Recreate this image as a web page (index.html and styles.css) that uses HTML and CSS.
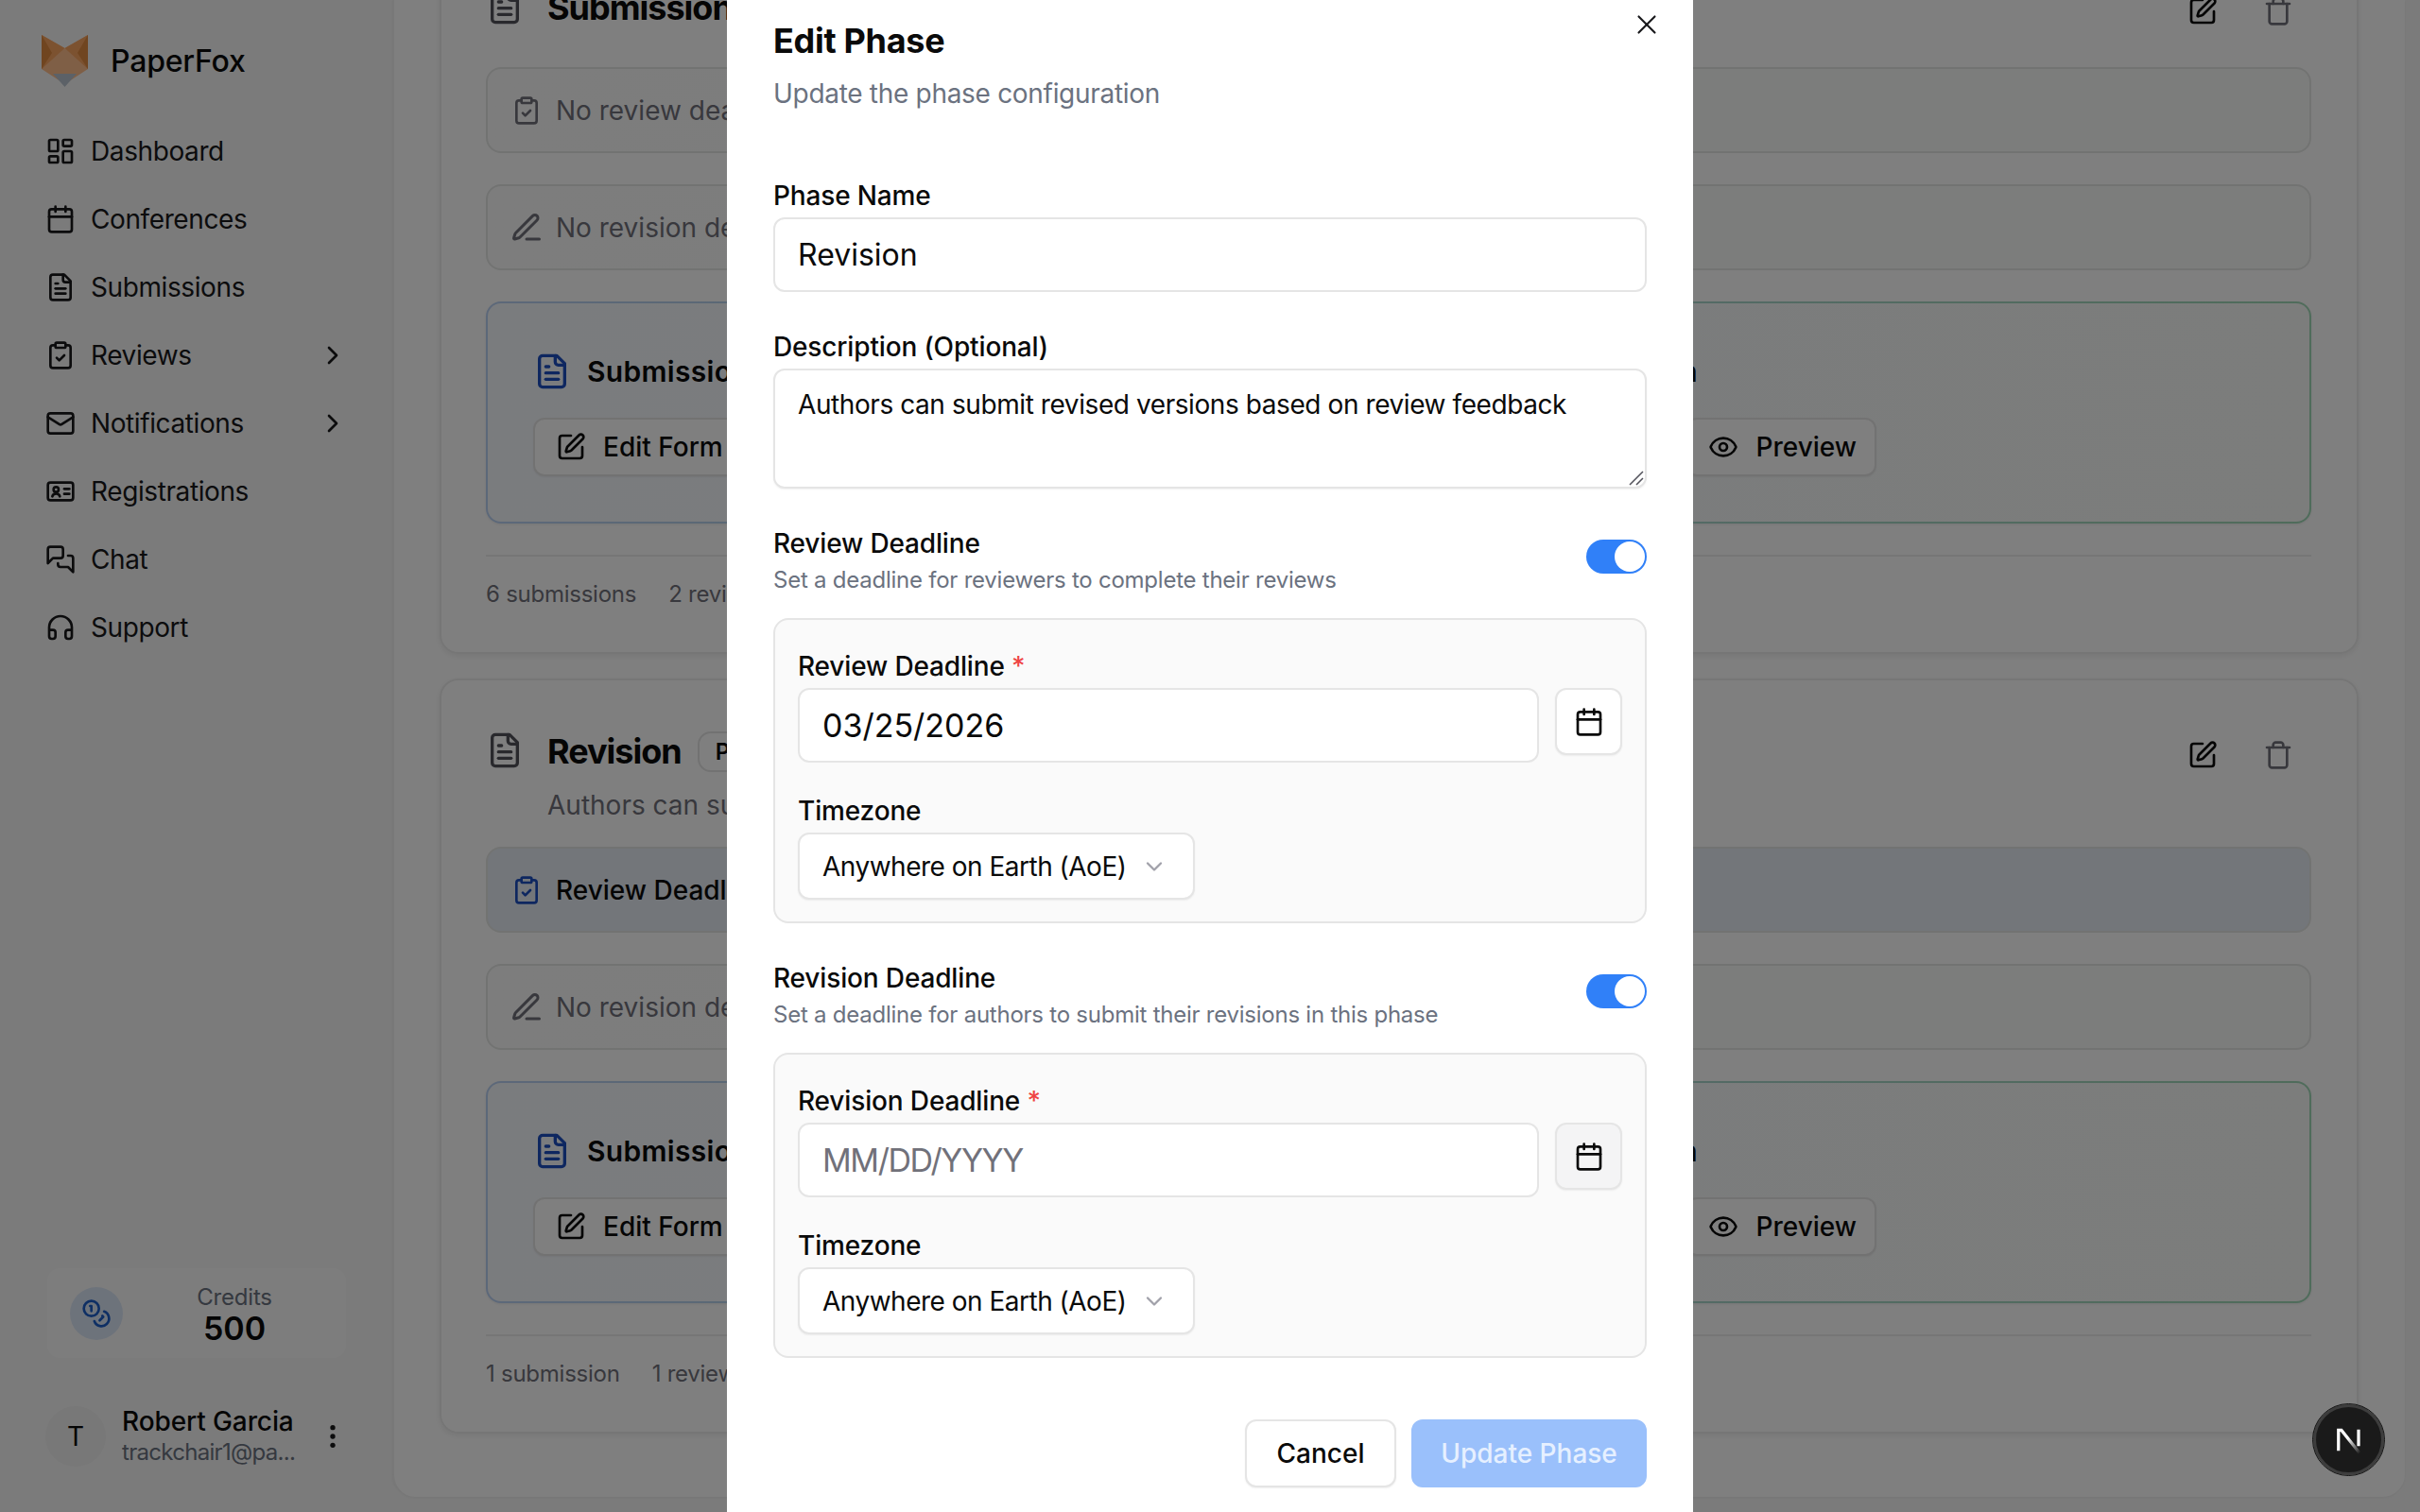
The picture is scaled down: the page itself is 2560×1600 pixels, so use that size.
FILE: index.html
```html
<!DOCTYPE html>
<html>
<head>
  <title>PaperFox - Edit Phase</title>
  <link rel="stylesheet" href="styles.css">
</head>
<body>
  <!-- icon sprite -->
  <svg class="sprite" xmlns="http://www.w3.org/2000/svg">
    <symbol id="i-dashboard" viewBox="0 0 24 24"><rect x="3" y="3" width="7" height="9" rx="1"/><rect x="14" y="3" width="7" height="5" rx="1"/><rect x="14" y="12" width="7" height="9" rx="1"/><rect x="3" y="16" width="7" height="5" rx="1"/></symbol>
    <symbol id="i-calendar" viewBox="0 0 24 24"><path d="M8 2v4"/><path d="M16 2v4"/><rect x="3" y="4" width="18" height="18" rx="2"/><path d="M3 10h18"/></symbol>
    <symbol id="i-file" viewBox="0 0 24 24"><path d="M15 2H6a2 2 0 0 0-2 2v16a2 2 0 0 0 2 2h12a2 2 0 0 0 2-2V7Z"/><path d="M14 2v4a2 2 0 0 0 2 2h4"/><path d="M10 9H8"/><path d="M16 13H8"/><path d="M16 17H8"/></symbol>
    <symbol id="i-clipboard" viewBox="0 0 24 24"><rect x="8" y="2" width="8" height="4" rx="1"/><path d="M16 4h2a2 2 0 0 1 2 2v14a2 2 0 0 1-2 2H6a2 2 0 0 1-2-2V6a2 2 0 0 1 2-2h2"/><path d="m9 14 2 2 4-4"/></symbol>
    <symbol id="i-mail" viewBox="0 0 24 24"><rect x="2" y="4" width="20" height="16" rx="2"/><path d="m22 7-8.97 5.7a1.94 1.94 0 0 1-2.06 0L2 7"/></symbol>
    <symbol id="i-chevron-right" viewBox="0 0 24 24"><path d="m9 18 6-6-6-6"/></symbol>
    <symbol id="i-chevron-down" viewBox="0 0 24 24"><path d="m6 9 6 6 6-6"/></symbol>
    <symbol id="i-contact" viewBox="0 0 24 24"><rect x="2" y="5" width="20" height="14" rx="2"/><circle cx="8.5" cy="10.500" r="2"/><path d="M5.500 16c.4-1.500 1.600-2.200 3-2.200s2.600.7 3 2.200"/><path d="M15 10h4"/><path d="M15 14h4"/></symbol>
    <symbol id="i-chat" viewBox="0 0 24 24"><path d="M14 9a2 2 0 0 1-2 2H6l-4 4V4a2 2 0 0 1 2-2h8a2 2 0 0 1 2 2z"/><path d="M18 9h2a2 2 0 0 1 2 2v11l-4-4h-6a2 2 0 0 1-2-2v-1"/></symbol>
    <symbol id="i-headphones" viewBox="0 0 24 24"><path d="M3 14h3a2 2 0 0 1 2 2v3a2 2 0 0 1-2 2H5a2 2 0 0 1-2-2v-7a9 9 0 0 1 18 0v7a2 2 0 0 1-2 2h-1a2 2 0 0 1-2-2v-3a2 2 0 0 1 2-2h3"/></symbol>
    <symbol id="i-edit" viewBox="0 0 24 24"><path d="M12 3H5a2 2 0 0 0-2 2v14a2 2 0 0 0 2 2h14a2 2 0 0 0 2-2v-7"/><path d="M18.375 2.625a1 1 0 0 1 3 3l-9.013 9.014a2 2 0 0 1-.853.505l-2.873.84a.5.5 0 0 1-.62-.62l.84-2.873a2 2 0 0 1 .506-.852z"/></symbol>
    <symbol id="i-trash" viewBox="0 0 24 24"><path d="M3 6h18"/><path d="M19 6v14c0 1-1 2-2 2H7c-1 0-2-1-2-2V6"/><path d="M8 6V4c0-1 1-2 2-2h4c1 0 2 1 2 2v2"/></symbol>
    <symbol id="i-pen" viewBox="0 0 24 24"><path d="M12 20h9"/><path d="M16.376 3.622a1 1 0 0 1 3.002 3.002L7.368 18.635a2 2 0 0 1-.855.506l-2.872.838a.5.5 0 0 1-.62-.62l.838-2.872a2 2 0 0 1 .506-.854z"/></symbol>
    <symbol id="i-eye" viewBox="0 0 24 24"><path d="M2.062 12.348a1 1 0 0 1 0-.696 10.750 10.750 0 0 1 19.876 0 1 1 0 0 1 0 .696 10.750 10.750 0 0 1-19.876 0"/><circle cx="12" cy="12" r="3"/></symbol>
    <symbol id="i-x" viewBox="0 0 24 24"><path d="M18 6 6 18"/><path d="m6 6 12 12"/></symbol>
    <symbol id="i-coins" viewBox="0 0 24 24"><circle cx="8" cy="8" r="6"/><path d="M18.090 10.370A6 6 0 1 1 10.340 18"/><path d="M7 6h1v4"/><path d="m16.710 13.880.7.710-2.820 2.820"/></symbol>
  </svg>

  <div class="app">
    <aside class="sidebar">
      <div class="brand">
        <svg class="fox" viewBox="0 0 49 55">
          <polygon points="0,0 24.500,14 49,0 49,36 24.500,52 0,36" fill="#ffbe8c"/>
          <polygon points="0,0 24.500,14 0,36" fill="#f9a460"/>
          <polygon points="0,0 11,19 0,36" fill="#e08a40"/>
          <polygon points="49,0 24.500,14 49,36" fill="#f9a460"/>
          <polygon points="49,0 38,19 49,36" fill="#e08a40"/>
          <polygon points="24.500,14 44,33 24.500,52 5,33" fill="#ffbe8c"/>
          <polygon points="12,41 37,41 24.500,55" fill="#b8c2ce"/>
        </svg>
        <span class="brand-name">PaperFox</span>
      </div>
      <nav class="nav">
        <a class="nav-item"><svg class="icon"><use href="#i-dashboard"/></svg>Dashboard</a>
        <a class="nav-item"><svg class="icon"><use href="#i-calendar"/></svg>Conferences</a>
        <a class="nav-item"><svg class="icon"><use href="#i-file"/></svg>Submissions</a>
        <a class="nav-item"><svg class="icon"><use href="#i-clipboard"/></svg>Reviews<svg class="icon nav-arrow"><use href="#i-chevron-right"/></svg></a>
        <a class="nav-item"><svg class="icon"><use href="#i-mail"/></svg>Notifications<svg class="icon nav-arrow"><use href="#i-chevron-right"/></svg></a>
        <a class="nav-item"><svg class="icon"><use href="#i-contact"/></svg>Registrations</a>
        <a class="nav-item"><svg class="icon"><use href="#i-chat"/></svg>Chat</a>
        <a class="nav-item"><svg class="icon"><use href="#i-headphones"/></svg>Support</a>
      </nav>
      <div class="credits">
        <span class="credits-icon"><svg class="icon"><use href="#i-coins"/></svg></span>
        <div class="credits-text">
          <span class="credits-label">Credits</span>
          <span class="credits-value">500</span>
        </div>
      </div>
      <div class="user">
        <span class="avatar">T</span>
        <div class="user-text">
          <span class="user-name">Robert Garcia</span>
          <span class="user-mail">trackchair1@pa...</span>
        </div>
        <svg class="dots" viewBox="0 0 24 24"><circle cx="12" cy="5" r="2"/><circle cx="12" cy="12" r="2"/><circle cx="12" cy="19" r="2"/></svg>
      </div>
    </aside>

    <main class="panel">
      <div class="panel-inner">
        <section class="card">
          <div class="card-head card-head-plain">
            <svg class="icon head-icon"><use href="#i-file"/></svg>
            <div class="head-text">
              <div class="head-title"><h2>Submission</h2><span class="badge">Phase 1</span></div>
            </div>
            <div class="head-actions">
              <svg class="icon"><use href="#i-edit"/></svg>
              <svg class="icon muted"><use href="#i-trash"/></svg>
            </div>
          </div>
          <div class="row">
            <svg class="icon row-icon row-icon-sm"><use href="#i-clipboard"/></svg>No review deadline set
          </div>
          <div class="row">
            <svg class="icon row-icon"><use href="#i-pen"/></svg>No revision deadline set
          </div>
          <div class="form-block">
            <div class="form-title">
              <span class="form-name"><svg class="icon form-icon"><use href="#i-file"/></svg>Submission Form</span>
              <span>Configuration</span>
            </div>
            <div class="form-actions">
              <button class="btn"><svg class="icon"><use href="#i-edit"/></svg>Edit Form</button>
              <button class="btn"><svg class="icon"><use href="#i-eye"/></svg>Preview</button>
            </div>
          </div>
          <div class="card-foot"><span>6 submissions</span><span>2 reviews</span></div>
        </section>

        <section class="card">
          <div class="card-head">
            <svg class="icon head-icon"><use href="#i-file"/></svg>
            <div class="head-text">
              <div class="head-title"><h2>Revision</h2><span class="badge">Phase 2</span></div>
              <p class="head-desc">Authors can submit revised versions based on review feedback</p>
            </div>
            <div class="head-actions">
              <svg class="icon"><use href="#i-edit"/></svg>
              <svg class="icon muted"><use href="#i-trash"/></svg>
            </div>
          </div>
          <div class="row row-active">
            <svg class="icon row-icon row-icon-sm"><use href="#i-clipboard"/></svg>Review Deadline
          </div>
          <div class="row">
            <svg class="icon row-icon"><use href="#i-pen"/></svg>No revision deadline set
          </div>
          <div class="form-block">
            <div class="form-title">
              <span class="form-name"><svg class="icon form-icon"><use href="#i-file"/></svg>Submission Form</span>
              <span>Configuration</span>
            </div>
            <div class="form-actions">
              <button class="btn"><svg class="icon"><use href="#i-edit"/></svg>Edit Form</button>
              <button class="btn"><svg class="icon"><use href="#i-eye"/></svg>Preview</button>
            </div>
          </div>
          <div class="card-foot"><span>1 submission</span><span>1 review</span></div>
        </section>
      </div>
    </main>
  </div>

  <div class="overlay">
    <div class="modal">
      <svg class="icon modal-close"><use href="#i-x"/></svg>
      <h1 class="modal-title">Edit Phase</h1>
      <p class="modal-sub">Update the phase configuration</p>

      <label class="label label-first">Phase Name</label>
      <input class="input" type="text" value="Revision">

      <label class="label label-next">Description (Optional)</label>
      <div class="textarea-wrap">
        <textarea class="input textarea">Authors can submit revised versions based on review feedback</textarea>
        <svg class="grip" viewBox="0 0 16 16"><path d="M15 1 1 15M15 8l-7 7"/></svg>
      </div>

      <div class="switch-row">
        <div>
          <div class="label">Review Deadline</div>
          <div class="switch-hint">Set a deadline for reviewers to complete their reviews</div>
        </div>
        <span class="switch"><span class="knob"></span></span>
      </div>
      <div class="box">
        <label class="label">Review Deadline <span class="req">*</span></label>
        <div class="date-row">
          <input class="input date-input" type="text" value="03/25/2026">
          <button class="cal-btn"><svg class="icon"><use href="#i-calendar"/></svg></button>
        </div>
        <label class="label label-tz">Timezone</label>
        <div class="select"><span>Anywhere on Earth (AoE)</span><svg class="icon select-arrow"><use href="#i-chevron-down"/></svg></div>
      </div>

      <div class="switch-row">
        <div>
          <div class="label">Revision Deadline</div>
          <div class="switch-hint">Set a deadline for authors to submit their revisions in this phase</div>
        </div>
        <span class="switch"><span class="knob"></span></span>
      </div>
      <div class="box">
        <label class="label">Revision Deadline <span class="req">*</span></label>
        <div class="date-row">
          <input class="input date-input" type="text" placeholder="MM/DD/YYYY">
          <button class="cal-btn cal-btn-hover"><svg class="icon"><use href="#i-calendar"/></svg></button>
        </div>
        <label class="label label-tz">Timezone</label>
        <div class="select"><span>Anywhere on Earth (AoE)</span><svg class="icon select-arrow"><use href="#i-chevron-down"/></svg></div>
      </div>

      <div class="modal-foot">
        <button class="foot-btn foot-cancel">Cancel</button>
        <button class="foot-btn foot-primary">Update Phase</button>
      </div>
    </div>
  </div>

  <div class="next-badge">
    <svg viewBox="0 0 32 32" width="40" height="40">
      <defs><linearGradient id="n-fade" x1="0" y1="0" x2="1" y2="1"><stop offset="0.4" stop-color="#fff"/><stop offset="1" stop-color="#fff" stop-opacity="0"/></linearGradient></defs>
      <path d="M7 25V7.500h2.500L25 27" fill="none" stroke="url(#n-fade)" stroke-width="2.600"/>
      <path d="M24 7v14" fill="none" stroke="#fff" stroke-width="2.600"/>
    </svg>
  </div>
</body>
</html>
```

FILE: styles.css
```css
/* Base */
* {
  box-sizing: border-box;
}
html, body {
  margin: 0;
  height: 100%;
  overflow: hidden;
}
body {
  font-family: Inter, "Liberation Sans", sans-serif;
  color: #0a0a0a;
  background-color: #f7f7f7;
}
h1, h2, p {
  margin: 0;
}
.sprite {
  display: none;
}
.icon {
  width: 32px;
  height: 32px;
  flex: none;
  fill: none;
  stroke: currentColor;
  stroke-width: 2;
  stroke-linecap: round;
  stroke-linejoin: round;
}
.app {
  display: flex;
  height: 100vh;
  padding-bottom: 16px;
}

/* Sidebar */
.sidebar {
  width: 415px;
  flex: none;
  display: flex;
  flex-direction: column;
  height: 100%;
  padding: 37px 0 0 44px;
}
.brand {
  display: flex;
  align-items: center;
  gap: 24px;
  height: 55px;
}
.fox {
  width: 49px;
  height: 55px;
}
.brand-name {
  font-size: 32px;
  font-weight: 500;
  letter-spacing: -0.2px;
}
.nav {
  display: flex;
  flex-direction: column;
  margin-top: 32px;
}
.nav-item {
  display: flex;
  align-items: center;
  gap: 16px;
  height: 72px;
  padding-left: 4px;
  width: 327px;
  font-size: 28px;
  letter-spacing: -0.4px;
  color: #18181b;
}
.nav-arrow {
  margin-left: auto;
  margin-right: 3px;
}
.credits {
  display: flex;
  align-items: center;
  width: 316px;
  height: 95px;
  margin-top: auto;
  margin-left: 6px;
  padding-left: 24px;
  border-radius: 14px;
  background-color: #fbfbfb;
}
.credits-icon {
  width: 56px;
  height: 56px;
  flex: none;
  display: flex;
  align-items: center;
  justify-content: center;
  border-radius: 50%;
  background-color: #dbe6f7;
  color: #1d5fc9;
}
.credits-text {
  flex: 1;
  display: flex;
  flex-direction: column;
  align-items: center;
}
.credits-label {
  font-size: 24px;
  line-height: 32px;
  letter-spacing: -0.2px;
  color: #6b7280;
}
.credits-value {
  font-size: 34px;
  line-height: 34px;
  font-weight: 600;
}
.user {
  display: flex;
  align-items: center;
  height: 64px;
  margin: 51px 0 32px 4px;
  gap: 17px;
}
.avatar {
  width: 64px;
  height: 64px;
  flex: none;
  display: flex;
  align-items: center;
  justify-content: center;
  border-radius: 50%;
  background-color: #f0f0f0;
  font-size: 28px;
}
.user-text {
  display: flex;
  flex-direction: column;
  width: 190px;
}
.user-name {
  font-size: 28px;
  line-height: 34px;
  font-weight: 500;
  letter-spacing: -0.1px;
}
.user-mail {
  font-size: 24px;
  line-height: 32px;
  letter-spacing: -0.7px;
  color: #6b7280;
}
.dots {
  width: 32px;
  height: 32px;
  fill: #18181b;
}

/* Main panel */
.panel {
  flex: 1;
  height: 100%;
  margin-right: 16px;
  padding: 0 49px 0 48px;
  overflow: hidden;
  border-radius: 0 0 24px 24px;
  border-left: 2px solid #f0f0f0;
  background-color: #fff;
  box-shadow: 0 1px 3px rgba(0, 0, 0, 0.05);
}
.panel-inner {
  display: flex;
  flex-direction: column;
  gap: 26px;
  margin-top: -69px;
}
.card {
  padding: 48px 48px 45px 47px;
  border: 2px solid #ececec;
  border-radius: 20px;
  box-shadow: 0 2px 6px rgba(0, 0, 0, 0.08);
}
.card-head {
  display: flex;
  height: 104px;
  margin-bottom: 24px;
}
.card-head-plain {
  height: 66px;
}
.head-icon {
  width: 40px;
  height: 40px;
  margin: 6px 25px 0 0;
  color: #52525b;
}
.head-text {
  flex: 1;
}
.head-title {
  display: flex;
  align-items: center;
  gap: 17px;
  height: 54px;
}
.head-title h2 {
  font-size: 36px;
  font-weight: 700;
  letter-spacing: -1px;
}
.badge {
  display: flex;
  align-items: center;
  height: 43px;
  padding: 0 17px;
  border: 2px solid #e5e5e5;
  border-radius: 14px;
  font-size: 24px;
  font-weight: 600;
}
.head-desc {
  margin-top: 10px;
  font-size: 28px;
  line-height: 40px;
  color: #71717a;
}
.head-actions {
  display: flex;
  gap: 48px;
  margin: 15px 19px 0 0;
}
.muted {
  color: #71717a;
}
.row {
  display: flex;
  align-items: center;
  gap: 13px;
  height: 91px;
  margin-bottom: 33px;
  padding-left: 23px;
  border: 2px solid #e5e7e5;
  border-radius: 16px;
  background: linear-gradient(90deg, #fafafa, #f8faf8);
  font-size: 28px;
  color: #71717a;
}
.row-icon {
  width: 36px;
  height: 36px;
  color: #71717a;
}
.row-icon-sm {
  width: 32px;
  height: 32px;
  margin: 0 2px;
}
.row-active {
  background: #e6ecf5;
  color: #0a0a0a;
  font-weight: 500;
}
.row-active .row-icon {
  color: #1d4fc0;
}
.form-block {
  height: 235px;
  padding: 48px;
  border: 2px solid transparent;
  border-radius: 16px;
  background: linear-gradient(90deg, #f5f8fd, #f8faf8) padding-box, linear-gradient(90deg, #b9d0f3, #9fd8b6) border-box;
  box-shadow: 0 1px 3px rgba(0, 0, 0, 0.08);
}
.form-title {
  display: flex;
  justify-content: space-between;
  align-items: center;
  width: 1232px;
  height: 47px;
  font-size: 30px;
  font-weight: 600;
  letter-spacing: 0.3px;
}
.form-name {
  display: flex;
  align-items: center;
  gap: 17px;
}
.form-icon {
  width: 40px;
  height: 40px;
  color: #1d4fc0;
}
.form-actions {
  display: flex;
  justify-content: space-between;
  width: 1421px;
  margin-top: 26px;
}
.btn {
  display: flex;
  align-items: center;
  gap: 18px;
  height: 62px;
  padding: 0 19px 0 22px;
  border: 2px solid #e5e5e5;
  border-radius: 12px;
  background-color: #fff;
  box-shadow: 0 1px 2px rgba(0, 0, 0, 0.06);
  font-family: inherit;
  font-size: 28px;
  font-weight: 500;
  color: #0a0a0a;
}
.card-foot {
  display: flex;
  gap: 34px;
  margin-top: 33px;
  padding-top: 24px;
  border-top: 2px solid #ececec;
  font-size: 24px;
  line-height: 32px;
  letter-spacing: -0.25px;
  color: #71717a;
}

/* Modal */
.overlay {
  position: fixed;
  top: 0;
  right: 0;
  bottom: 0;
  left: 0;
  display: flex;
  justify-content: center;
  background-color: rgba(0, 0, 0, 0.5);
}
.modal {
  position: relative;
  width: 1022px;
  height: 1600px;
  padding: 17px 49px 0;
  background-color: #fff;
}
.modal-close {
  position: absolute;
  top: 9px;
  right: 32px;
  width: 34px;
  height: 34px;
  stroke-width: 1.500;
  color: #18181b;
}
.modal-title {
  font-size: 36px;
  line-height: 52px;
  font-weight: 700;
  letter-spacing: -0.3px;
}
.modal-sub {
  margin-top: 10px;
  font-size: 28px;
  line-height: 40px;
  letter-spacing: -0.3px;
  color: #6b7280;
}
.label {
  display: block;
  font-size: 28px;
  line-height: 36px;
  font-weight: 500;
  letter-spacing: -0.15px;
}
.label-first {
  margin-top: 70px;
}
.label-next {
  margin-top: 40px;
}
.input {
  display: block;
  width: 100%;
  height: 79px;
  margin-top: 5px;
  padding: 0 24px;
  border: 2px solid #e5e5e5;
  border-radius: 12px;
  outline: none;
  background-color: #fff;
  font-family: inherit;
  font-size: 32px;
  color: #0a0a0a;
}
.input::placeholder {
  color: #71717a;
  letter-spacing: -1.4px;
}
.textarea-wrap {
  position: relative;
}
.textarea {
  height: 127px;
  padding: 14px 24px;
  resize: none;
  font-size: 28px;
  line-height: 44px;
  letter-spacing: -0.42px;
  box-shadow: 0 1px 2px rgba(0, 0, 0, 0.06);
}
.grip {
  position: absolute;
  right: 3px;
  bottom: 3px;
  width: 16px;
  height: 16px;
  fill: none;
  stroke: #52525b;
  stroke-width: 1.500;
}
.switch-row {
  display: flex;
  justify-content: space-between;
  align-items: flex-start;
  margin-top: 40px;
}
.switch-hint {
  margin-top: 5px;
  font-size: 24px;
  line-height: 32px;
  letter-spacing: -0.24px;
  color: #6b7280;
}
.switch {
  display: flex;
  justify-content: flex-end;
  width: 64px;
  height: 36px;
  margin-top: 14px;
  padding: 2px;
  border-radius: 18px;
  background-color: #3080f8;
}
.knob {
  width: 32px;
  height: 32px;
  border-radius: 50%;
  background-color: #fff;
}
.box {
  height: 323px;
  margin-top: 24px;
  padding: 32px 24px 0;
  border: 2px solid #e5e5e5;
  border-radius: 16px;
  background-color: #fafafa;
}
.box .label {
  line-height: 34px;
}
.req {
  color: #ef4444;
}
.date-row {
  display: flex;
  gap: 17px;
  margin-top: 6px;
}
.date-input {
  flex: 1;
  margin-top: 0;
  font-size: 34px;
}
.cal-btn {
  display: flex;
  align-items: center;
  justify-content: center;
  width: 71px;
  height: 71px;
  flex: none;
  padding: 0;
  border: 2px solid #e5e5e5;
  border-radius: 12px;
  background-color: #fff;
  box-shadow: 0 1px 2px rgba(0, 0, 0, 0.06);
  color: #0a0a0a;
}
.cal-btn-hover {
  background-color: #f4f4f5;
}
.box .label-tz {
  margin-top: 34px;
}
.select {
  display: flex;
  align-items: center;
  justify-content: space-between;
  width: 420px;
  height: 71px;
  margin-top: 6px;
  padding: 0 27px 0 24px;
  border: 2px solid #e5e5e5;
  border-radius: 12px;
  background-color: #fff;
  box-shadow: 0 1px 2px rgba(0, 0, 0, 0.06);
  font-size: 28px;
  letter-spacing: -0.5px;
}
.select-arrow {
  width: 28px;
  height: 28px;
  color: #a1a1aa;
}
.modal-foot {
  display: flex;
  justify-content: flex-end;
  gap: 16px;
  margin-top: 65px;
}
.foot-btn {
  height: 72px;
  padding: 0;
  border: 2px solid #e5e5e5;
  border-radius: 12px;
  background-color: #fff;
  box-shadow: 0 1px 2px rgba(0, 0, 0, 0.06);
  font-family: inherit;
  font-size: 28px;
  font-weight: 500;
  color: #0a0a0a;
}
.foot-cancel {
  width: 160px;
}
.foot-primary {
  width: 249px;
  border-color: #9ac0fb;
  background-color: #9ac0fb;
  box-shadow: none;
  color: #e6f0ff;
}

/* Dev badge */
.next-badge {
  position: fixed;
  right: 38px;
  bottom: 39px;
  width: 75px;
  height: 75px;
  display: flex;
  align-items: center;
  justify-content: center;
  border: 3px solid #3d3d3d;
  border-radius: 50%;
  outline: 1px solid #111;
  background-color: #1a1a1a;
}
```
